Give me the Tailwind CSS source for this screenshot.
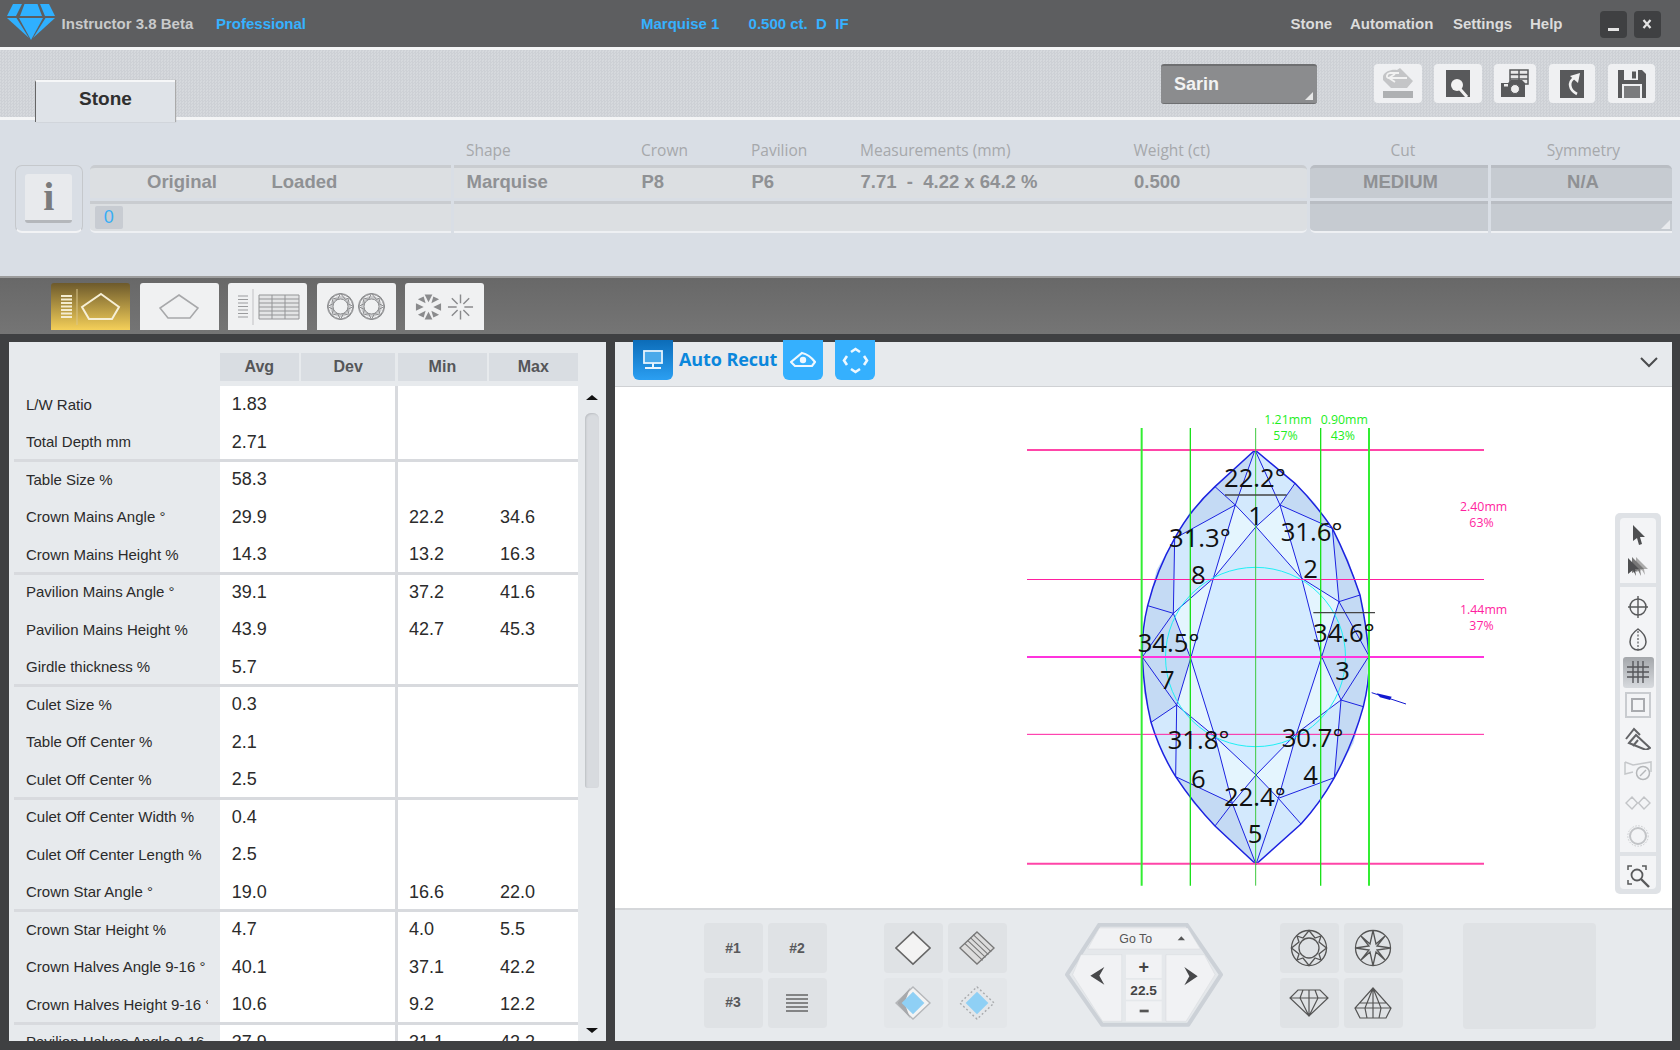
<!DOCTYPE html>
<html><head><meta charset="utf-8"><script src="https://cdn.jsdelivr.net/npm/@tailwindcss/browser@4"></script></head>
<body class="m-0">
<div class="w-[1680px] h-[1050px] overflow-hidden flex flex-col bg-[#3f4042] font-['Liberation_Sans',Arial,sans-serif]">

<!-- title bar -->
<header class="h-[47px] shrink-0 bg-[#5d5e60] flex items-center pl-[7px] pt-[1px] text-[15px] font-bold whitespace-nowrap">
  <svg class="w-[54.6px] h-[40px] shrink-0 -mt-[4px]" viewBox="0 0 54.6 40"><g fill="#2fb0ff"><polygon points="6,2 15,2 9,14 0,14"/><polygon points="17.5,2 30.5,2 35,14 13,14"/><polygon points="33,2 42,2 48,14 38,14"/><polygon points="0,16 9.5,16 22,36"/><polygon points="12,16 36,16 24,38"/><polygon points="38.5,16 48,16 26,36"/></g></svg>
  <span class="w-[154.4px] text-[#c9cacb]">Instructor 3.8 Beta</span>
  <span class="w-[425px] text-[#36b1ff]">Professional</span>
  <span class="w-[107.6px] text-[#36b1ff]">Marquise 1</span>
  <span class="w-[541.9px] text-[#36b1ff]">0.500 ct.&nbsp; D&nbsp; IF</span>
  <span class="w-[59.5px] text-[#dcdcdc]">Stone</span>
  <span class="w-[103px] text-[#dcdcdc]">Automation</span>
  <span class="w-[77px] text-[#dcdcdc]">Settings</span>
  <span class="w-[70px] text-[#dcdcdc]">Help</span>
  <span class="w-[27px] h-[27px] rounded-[4px] bg-[#3f4042] flex items-end justify-center pb-[7px]"><span class="w-[11px] h-[2.5px] bg-[#e4e4e4]"></span></span>
  <span class="w-[27px] h-[27px] ml-[7px] rounded-[4px] bg-[#3f4042] flex items-center justify-center"><svg class="w-[10px] h-[10px]" viewBox="0 0 10 10"><path d="M1.5 1 L8.5 9 M8.5 1 L1.5 9" stroke="#e4e4e4" stroke-width="2.2"/></svg></span>
</header>

<!-- textured strip -->
<div class="h-[73px] shrink-0 border-y-[3px] border-[#f4f5f6] bg-[repeating-conic-gradient(#cdd0d5_0_25%,#d6d9dd_0_50%)] bg-[length:3px_3px] flex items-start relative">
  <div class="ml-[35px] mt-[30px] w-[140px] h-[42px] -mb-[2px] pb-[6px] relative bg-[#dfe3e8] border-t-2 border-t-[#f6f7f8] border-l border-l-[#666] shadow-[1px_0_1px_#aaa] flex items-center justify-center text-[19px] font-bold text-[#2f2f2f]">Stone</div>
  <div class="ml-[986px] mt-[14px] w-[156px] h-[40px] rounded-[3px] bg-[#8b8c8e] border-t-2 border-t-[#6e6f71] border-b border-b-[#6e6f71] relative flex items-center pl-[13px] text-[18px] font-bold text-[#f2f2f2]">Sarin
    <svg class="absolute right-[4px] bottom-[3px] w-[8px] h-[8px]" viewBox="0 0 8 8"><polygon points="8,0 8,8 0,8" fill="#e6e6e6"/></svg>
  </div>
  <div class="ml-[57px] mt-[14px] w-[48px] h-[39px] rounded-[4px] bg-[#eff0f2] flex items-center justify-center">
    <svg class="w-[36px] h-[34px]" viewBox="0 0 36 34"><rect x="3" y="24" width="30" height="7" fill="#aeb0b2"/><path d="M3 9 C5 4 12 2 17 3 L20 1 L33 14 L27 21 H11 L3 13Z" fill="#c4c5c7"/><path d="M27 11 H9 C6 11 6 7 10 6 H19 M15 7 L9 11 L15 15" fill="none" stroke="#f2f2f2" stroke-width="1.8"/></svg>
  </div>
  <div class="ml-[12px] mt-[14px] w-[48px] h-[39px] rounded-[4px] bg-[#eff0f2] flex items-center justify-center">
    <svg class="w-[26px] h-[29px]" viewBox="0 0 26 29"><rect x="1" y="1" width="24" height="27" fill="#58595b"/><circle cx="12" cy="16" r="6" fill="#f2f2f2"/><path d="M15 20 L22 28" stroke="#f2f2f2" stroke-width="3"/></svg>
  </div>
  <div class="ml-[12px] mt-[14px] w-[42px] h-[39px] rounded-[4px] bg-[#eff0f2] flex items-center justify-center">
    <svg class="w-[30px] h-[30px]" viewBox="0 0 30 30"><path d="M10 1 H28 V15 H10 Z M10 5.5 H28 M10 10 H28 M19 1 V15" fill="#e8e8e8" stroke="#58595b" stroke-width="1.5"/><path d="M1 14 H8 L11 11 H22 L25 14 V28 H1 Z" fill="#58595b"/><circle cx="15" cy="20" r="4.5" fill="#eee" stroke="#58595b" stroke-width="1"/><rect x="4" y="15" width="4" height="2.5" fill="#eee"/></svg>
  </div>
  <div class="ml-[13px] mt-[14px] w-[46px] h-[39px] rounded-[4px] bg-[#eff0f2] flex items-center justify-center">
    <svg class="w-[24px] h-[28px]" viewBox="0 0 24 28"><rect x="0" y="0" width="24" height="28" fill="#58595b"/><path d="M17 24 C9 20 8 12 14 8" fill="none" stroke="#f2f2f2" stroke-width="2.6"/><polygon points="10,6 20,3 18,13" fill="#f2f2f2"/></svg>
  </div>
  <div class="ml-[13px] mt-[14px] w-[47px] h-[39px] rounded-[4px] bg-[#eff0f2] flex items-center justify-center">
    <svg class="w-[28px] h-[28px]" viewBox="0 0 28 28"><path d="M0 0 H24 L28 4 V28 H0 Z" fill="#58595b"/><rect x="6" y="0" width="14" height="10" fill="#eff0f2"/><rect x="14" y="1.5" width="4" height="7" fill="#58595b"/><rect x="4" y="14" width="20" height="14" fill="#eff0f2"/><rect x="6" y="16" width="16" height="12" fill="#7a7b7d"/></svg>
  </div>
</div>

<!-- stone info -->
<section class="h-[158px] shrink-0 bg-[#d9dee5] border-b-2 border-b-[#9c9c9c] flex items-start pl-[15px]">
  <div class="mt-[45px] w-[67.5px] h-[68px] rounded-[7px] border border-[#c5c8cc] border-b-2 border-b-[#f2f3f5] flex items-center justify-center shrink-0">
    <div class="w-[47px] h-[49px] rounded-[3px] bg-[#e8eaed] border-b-[3px] border-b-[#b4b7bb] flex items-center justify-center font-['Liberation_Serif',serif] font-bold text-[40px] text-[#7a7b7d]">i</div>
  </div>
  <div class="ml-[7px] flex flex-col">
    <div class="h-[45px] flex items-end pb-[3px] font-['Open_Sans',sans-serif] text-[15.5px] text-[#a6a8ab] whitespace-nowrap">
      <span class="w-[376.5px]"></span><span class="w-[175px]">Shape</span><span class="w-[110px]">Crown</span><span class="w-[109px]">Pavilion</span><span class="w-[273.5px]">Measurements (mm)</span><span class="w-[176.5px]">Weight (ct)</span><span class="w-[182px] text-center pl-[4px]">Cut</span><span class="w-[181px] text-center pl-[2px]">Symmetry</span>
    </div>
    <div class="flex gap-[3px] h-[33px] text-[18.5px] font-bold text-[#8f9194] whitespace-nowrap">
      <div class="w-[361px] bg-[#dcdfe2] border-t-[3px] border-[#c9ccd0] rounded-tl-[5px] flex items-center pb-[2px]"><span class="ml-[57.5px] w-[124.5px]">Original</span><span>Loaded</span></div>
      <div class="w-[853px] bg-[#dcdfe2] border-t-[3px] border-[#c9ccd0] rounded-tr-[5px] flex items-center pl-[13px] pb-[2px]"><span class="w-[175px]">Marquise</span><span class="w-[110px]">P8</span><span class="w-[109px]">P6</span><span class="w-[273.5px]">7.71&nbsp; -&nbsp; 4.22 x 64.2 %</span><span>0.500</span></div>
      <div class="w-[178px] bg-[#c6cbd1] border-t-[3px] border-[#b9bdc3] rounded-tl-[5px] flex items-center justify-center pb-[2px] pl-[4px]">MEDIUM</div>
      <div class="w-[181px] bg-[#c6cbd1] border-t-[3px] border-[#b9bdc3] rounded-tr-[5px] flex items-center justify-center pb-[2px] pl-[4px]">N/A</div>
    </div>
    <div class="flex gap-[3px] h-[32px] mt-[3px] border-b-0">
      <div class="w-[361px] bg-[#dcdfe2] border-t-[3px] border-t-[#c9ccd0] border-b-2 border-b-[#eef0f3] rounded-bl-[5px] flex items-center pl-[5.5px]"><span class="w-[27.6px] h-[23px] rounded-[2px] bg-[#c8ccd2] flex items-center justify-center text-[18px] text-[#38aef5]">0</span></div>
      <div class="w-[853px] bg-[#dcdfe2] border-t-[3px] border-t-[#c9ccd0] border-b-2 border-b-[#eef0f3] rounded-br-[5px]"></div>
      <div class="w-[178px] bg-[#c6cbd1] border-t-[3px] border-t-[#b9bdc3] border-b-2 border-b-[#eef0f3] rounded-bl-[5px]"></div>
      <div class="w-[181px] bg-[#c6cbd1] border-t-[3px] border-t-[#b9bdc3] border-b-2 border-b-[#eef0f3] relative"><svg class="absolute right-[2px] bottom-[2px] w-[9px] h-[9px]" viewBox="0 0 9 9"><polygon points="9,0 9,9 0,9" fill="#e8eaed"/></svg></div>
    </div>
  </div>
</section>

<!-- view tabs -->
<nav class="h-[56px] shrink-0 bg-[linear-gradient(#686868,#757575)] flex items-start pt-[5px] pl-[51px] gap-[9.5px]">
  <div class="w-[79px] h-[47px] rounded-t-[3px] bg-[linear-gradient(#6d5a2c,#f4cf59)] flex items-center justify-center">
    <svg class="w-[66px] h-[38px]" viewBox="0 0 66 38"><path d="M3 8H14M3 11.5H14M3 15H14M3 18.5H14M3 22H14M3 25.5H14M3 29H14" stroke="#f4ecd0" stroke-width="2"/><path d="M19 1V37" stroke="#d8c48a" stroke-width="1"/><polygon points="43,6 61,19 54,31 31,31 24,19" fill="none" stroke="#f6efd6" stroke-width="2"/></svg>
  </div>
  <div class="w-[79px] h-[47px] rounded-t-[3px] bg-[#f0f1f2] flex items-center justify-center">
    <svg class="w-[40px] h-[26px]" viewBox="0 0 40 26"><polygon points="20,1 39,14 31,24 9,24 1,14" fill="none" stroke="#a7a8aa" stroke-width="1.6"/></svg>
  </div>
  <div class="w-[79px] h-[47px] rounded-t-[3px] bg-[#f0f1f2] flex items-center justify-center">
    <svg class="w-[66px] h-[38px]" viewBox="0 0 66 38"><path d="M3 8H13M3 11.5H13M3 15H13M3 18.5H13M3 22H13M3 25.5H13M3 29H13" stroke="#9a9b9d" stroke-width="1.2"/><path d="M18 1V37" stroke="#c9cacc" stroke-width="1.2"/><path d="M24 7H64V31H24ZM24 11H64M24 15H64M24 19H64M24 23H64M24 27H64M37 7V31M50 7V31" fill="#e3e4e5" stroke="#949597" stroke-width="1"/></svg>
  </div>
  <div class="w-[79px] h-[47px] rounded-t-[3px] bg-[#f0f1f2] flex items-center justify-center gap-[4px]">
    <svg class="w-[27px] h-[27px]" viewBox="-13.5 -13.5 27 27"><circle r="10.5" fill="#c9cacc"/><circle r="7.5" fill="#f0f1f2"/><g fill="none" stroke="#8c8d8f" stroke-width="1"><circle r="13"/><circle r="7.5"/><polygon points="0,-13 5,-11 9,-9 11,-5 13,0 11,5 9,9 5,11 0,13 -5,11 -9,9 -11,5 -13,0 -11,-5 -9,-9 -5,-11"/><path d="M0 -13L5 -7L9 -9L7 -3L13 0L7 3L9 9L3 7L0 13L-3 7L-9 9L-7 3L-13 0L-7 -3L-9 -9L-3 -7Z"/></g></svg>
    <svg class="w-[27px] h-[27px]" viewBox="-13.5 -13.5 27 27"><circle r="10.5" fill="#c9cacc"/><circle r="7.5" fill="#f0f1f2"/><g fill="none" stroke="#8c8d8f" stroke-width="1"><circle r="13"/><circle r="7.5"/><polygon points="0,-13 5,-11 9,-9 11,-5 13,0 11,5 9,9 5,11 0,13 -5,11 -9,9 -11,5 -13,0 -11,-5 -9,-9 -5,-11"/><path d="M0 -13L5 -7L9 -9L7 -3L13 0L7 3L9 9L3 7L0 13L-3 7L-9 9L-7 3L-13 0L-7 -3L-9 -9L-3 -7Z"/></g></svg>
  </div>
  <div class="w-[79px] h-[47px] rounded-t-[3px] bg-[#f0f1f2] flex items-center justify-center gap-[5px]">
    <svg class="w-[27px] h-[28px]" viewBox="-14 -14 28 28"><g fill="#8a8b8d"><polygon points="-4,-13 4,-13 0,-5"/><polygon points="-4,13 4,13 0,5"/><polygon points="-13,-4 -13,4 -5,0"/><polygon points="13,-4 13,4 5,0"/><polygon points="-11,-8 -5,-11 -3,-4"/><polygon points="11,-8 5,-11 3,-4"/><polygon points="-11,8 -5,11 -3,4"/><polygon points="11,8 5,11 3,4"/></g></svg>
    <svg class="w-[27px] h-[28px]" viewBox="-14 -14 28 28"><path d="M0 -13V-4M0 13V4M-13 0H-4M13 0H4M-9 -9L-3 -3M9 -9L3 -3M-9 9L-3 3M9 9L3 3" stroke="#8a8b8d" stroke-width="1.5"/></svg>
  </div>
</nav>

<!-- main -->
<main class="flex-1 flex pl-[9px] pt-[8px] pb-[9px] gap-[9px] min-h-0">
  <!-- table panel -->
  <div class="w-[597px] bg-[#e7eaed] flex pl-[4px] overflow-hidden">
    <div class="w-[564.7px] flex flex-col">
      <div class="mt-[11px] h-[28px] shrink-0 ml-[207px] flex text-[16px] font-bold text-[#555659]">
        <div class="w-[78.5px] bg-[#d9dde2] flex items-center justify-center">Avg</div>
        <div class="w-[94.4px] ml-[2.5px] bg-[#d9dde2] flex items-center justify-center">Dev</div>
        <div class="w-[88.8px] ml-[2.6px] bg-[#d9dde2] flex items-center justify-center">Min</div>
        <div class="w-[88.7px] ml-[2.2px] bg-[#d9dde2] flex items-center justify-center">Max</div>
      </div>
      <div class="mt-[5px] flex-1 min-h-0 overflow-hidden text-[#2b2b2b] whitespace-nowrap bg-[linear-gradient(90deg,#e7eaed_207px,#fff_207px,#fff_382.4px,#d8dade_382.4px,#d8dade_385px,#fff_385px)]">
        <div class="grid grid-cols-[205.7px_177.3px_91px_1fr] grid-rows-[repeat(18,37.5px)] pl-[13px] text-[18px] items-center">
          <span class="w-[182px] overflow-hidden text-[15px]">L/W Ratio</span><span class="col-span-3">1.83</span>
          <span class="w-[182px] overflow-hidden text-[15px]">Total Depth mm</span><span class="col-span-3">2.71</span>
          <span class="w-[182px] overflow-hidden text-[15px]">Table Size %</span><span class="col-span-3">58.3</span>
          <span class="w-[182px] overflow-hidden text-[15px]">Crown Mains Angle °</span><span>29.9</span><span>22.2</span><span>34.6</span>
          <span class="w-[182px] overflow-hidden text-[15px]">Crown Mains Height %</span><span>14.3</span><span>13.2</span><span>16.3</span>
          <span class="w-[182px] overflow-hidden text-[15px]">Pavilion Mains Angle °</span><span>39.1</span><span>37.2</span><span>41.6</span>
          <span class="w-[182px] overflow-hidden text-[15px]">Pavilion Mains Height %</span><span>43.9</span><span>42.7</span><span>45.3</span>
          <span class="w-[182px] overflow-hidden text-[15px]">Girdle thickness %</span><span class="col-span-3">5.7</span>
          <span class="w-[182px] overflow-hidden text-[15px]">Culet Size %</span><span class="col-span-3">0.3</span>
          <span class="w-[182px] overflow-hidden text-[15px]">Table Off Center %</span><span class="col-span-3">2.1</span>
          <span class="w-[182px] overflow-hidden text-[15px]">Culet Off Center %</span><span class="col-span-3">2.5</span>
          <span class="w-[182px] overflow-hidden text-[15px]">Culet Off Center Width %</span><span class="col-span-3">0.4</span>
          <span class="w-[182px] overflow-hidden text-[15px]">Culet Off Center Length %</span><span class="col-span-3">2.5</span>
          <span class="w-[182px] overflow-hidden text-[15px]">Crown Star Angle °</span><span>19.0</span><span>16.6</span><span>22.0</span>
          <span class="w-[182px] overflow-hidden text-[15px]">Crown Star Height %</span><span>4.7</span><span>4.0</span><span>5.5</span>
          <span class="w-[182px] overflow-hidden text-[15px]">Crown Halves Angle 9-16 °</span><span>40.1</span><span>37.1</span><span>42.2</span>
          <span class="w-[182px] overflow-hidden text-[15px]">Crown Halves Height 9-16 °</span><span>10.6</span><span>9.2</span><span>12.2</span>
          <span class="w-[182px] overflow-hidden text-[15px]">Pavilion Halves Angle 9-16 °</span><span>37.9</span><span>31.1</span><span>42.2</span>
        </div>
        <div class="relative -mt-[675px] ml-[1px] flex flex-col">
          <div class="h-[3px] mt-[73px] bg-[#d8dade]"></div>
          <div class="h-[3px] mt-[109.5px] bg-[#d8dade]"></div>
          <div class="h-[3px] mt-[109.5px] bg-[#d8dade]"></div>
          <div class="h-[3px] mt-[109.5px] bg-[#d8dade]"></div>
          <div class="h-[3px] mt-[109.5px] bg-[#d8dade]"></div>
          <div class="h-[3px] mt-[109.5px] bg-[#d8dade]"></div>
        </div>
      </div>
    </div>
    <div class="w-[28.3px] flex flex-col items-center">
      <div class="mt-[53px] w-0 h-0 border-x-[6px] border-x-transparent border-b-[5px] border-b-[#111]"></div>
      <div class="mt-[13px] w-[14.5px] h-[375px] rounded-t-[6px] rounded-b-[3px] bg-[#d8dbdf] shadow-[inset_1px_1px_2px_#bcbfc3]"></div>
      <div class="mt-[240px] w-0 h-0 border-x-[6px] border-x-transparent border-t-[5px] border-t-[#111]"></div>
    </div>
  </div>

  <!-- diagram panel -->
  <div class="w-[1057px] flex flex-col bg-[#e7eaed]">
    <div class="h-[44px] shrink-0 flex items-start pl-[18px] pr-[14px]">
      <div class="-mt-[2px] w-[40px] h-[40px] rounded-b-[6px] bg-[linear-gradient(#0c6cb8,#2b9ff2)] flex items-center justify-center">
        <svg class="w-[22px] h-[22px]" viewBox="0 0 22 22"><rect x="2" y="2" width="18" height="12" fill="none" stroke="#e8f4fd" stroke-width="1.8"/><rect x="3" y="3" width="16" height="10" fill="#4aa9ea"/><path d="M11 14V18M3 19H19" stroke="#e8f4fd" stroke-width="2"/></svg>
      </div>
      <span class="ml-[6px] w-[104px] font-['Open_Sans',sans-serif] font-bold text-[18px] leading-[35px] text-[#0b87dc] whitespace-nowrap tracking-[-0.1px]">Auto Recut</span>
      <div class="-mt-[2px] w-[40px] h-[40px] rounded-b-[6px] bg-[#35b0fe] flex items-center justify-center">
        <svg class="w-[26px] h-[18px]" viewBox="0 0 26 18"><path d="M1 11 L12 2 C17 3 22 7 25 11 L22 15 H5 Z" fill="none" stroke="#eef8ff" stroke-width="2.2"/><circle cx="13" cy="9" r="3.2" fill="#eef8ff"/></svg>
      </div>
      <div class="-mt-[2px] ml-[12px] w-[40px] h-[40px] rounded-b-[6px] bg-[#35b0fe] flex items-center justify-center">
        <svg class="w-[27px] h-[27px]" viewBox="0 0 27 27"><path d="M9 5 L13.5 2 L18 5 M22 9 L25 13.5 L22 18 M18 22 L13.5 25 L9 22 M5 18 L2 13.5 L5 9" fill="none" stroke="#eef8ff" stroke-width="2.6"/></svg>
      </div>
      <svg class="ml-auto mt-[15px] w-[18px] h-[11px]" viewBox="0 0 18 11"><path d="M1 1 L9 9 L17 1" fill="none" stroke="#4a4b4d" stroke-width="2"/></svg>
    </div>

    <div class="h-[522px] shrink-0 bg-white relative border-t border-t-[#cfd1d4]">
      <svg class="absolute left-[385px] top-[13px] w-[520px] h-[500px]" viewBox="0 0 1560 1500" font-family="'Open Sans',sans-serif">
        <path d="M765 150 L645 260 Q570 330 524 415 Q470 510 443 617 Q425 690 427 771 Q432 880 453 967 Q480 1055 527 1130 Q580 1210 645 1278 L768 1393 L903 1272 Q960 1210 1003 1133 Q1060 1030 1090 920 Q1110 840 1107 768 Q1100 680 1080 585 Q1045 480 997 385 Q945 310 885 250 Z" fill="#d3e9fd"/>
        <g fill="#c4daf4">
          <polygon points="645,260 706,315 524,415 570,335"/><polygon points="885,250 840,315 997,385 945,310"/>
          <polygon points="524,415 520,640 443,617 470,510"/><polygon points="997,385 1017,605 1080,585 1045,480"/>
          <polygon points="443,617 520,640 427,771"/><polygon points="1080,585 1017,605 1107,768"/>
          <polygon points="427,771 530,915 453,967 432,880"/><polygon points="1107,768 1023,900 1090,920"/>
          <polygon points="1023,900 1090,920 1060,1030 1003,1133"/><polygon points="527,1130 697,1210 645,1278 580,1210"/>
          <polygon points="427,771 520,640 572,775 530,915"/><polygon points="1107,768 1017,605 965,770 1023,900"/>
          <polygon points="765,150 645,260 706,315"/><polygon points="697,1210 645,1278 768,1393"/>
        </g>
        <g fill="#e4f5fe">
          <polygon points="706,315 768,380 640,535"/><polygon points="840,315 768,380 905,535"/>
          <polygon points="645,1010 768,1125 697,1210"/><polygon points="890,1000 768,1125 835,1195"/>
          <polygon points="520,640 640,535 572,775"/><polygon points="1017,605 905,535 965,770"/>
          <polygon points="530,915 572,775 645,1010"/><polygon points="1023,900 965,770 890,1000"/>
        </g>
        <polygon points="640,535 905,535 965,770 890,1000 768,1125 645,1010 572,775" fill="#d4ebff"/>
        <g fill="none" stroke="#1c22e0" stroke-width="3">
          <path d="M765 150 L645 260 Q570 330 524 415 Q470 510 443 617 Q425 690 427 771 Q432 880 453 967 Q480 1055 527 1130 Q580 1210 645 1278 L768 1393 L903 1272 Q960 1210 1003 1133 Q1060 1030 1090 920 Q1110 840 1107 768 Q1100 680 1080 585 Q1045 480 997 385 Q945 310 885 250 Z" stroke-width="4.5"/>
          <path d="M765 150 L706 315 L640 535 L572 775 L645 1010 L697 1210 L768 1393 L835 1195 L890 1000 L965 770 L905 535 L840 315 L765 150"/>
          <path d="M645 260 L706 315 L768 380 L640 535 L520 640 L572 775 L530 915 L645 1010 L768 1125 L890 1000 L1023 900 L965 770 L1017 605 L905 535 L768 380 L840 315 L885 250"/>
          <path d="M706 315 L524 415 L520 640 L443 617 M520 640 L427 771 L530 915 L453 967 M530 915 L527 1130 L697 1210 L645 1278 M697 1210 L768 1125 L835 1195 L903 1272 M835 1195 L1003 1133 L1023 900 L1090 920 M1023 900 L1107 768 L1017 605 L1080 585 M1017 605 L997 385 L840 315"/>
        </g>
        <ellipse cx="766.5" cy="771" rx="270" ry="269" fill="none" stroke="#1ff0f5" stroke-width="3"/>
        <g fill="none">
          <path d="M81 150H1452" stroke="#ff45a8" stroke-width="6"/><path d="M81 538.5H1452" stroke="#ff1fa0" stroke-width="3"/><path d="M81 771H1452" stroke="#ff33dd" stroke-width="6"/><path d="M81 1003H1452" stroke="#ff1fa0" stroke-width="3"/><path d="M81 1391H1452" stroke="#ff45a8" stroke-width="6"/>
          <path d="M425 84V1457" stroke="#33ee33" stroke-width="6"/><path d="M571 84V1457" stroke="#1be01b" stroke-width="4"/><path d="M767 84V1457" stroke="#3ec93e" stroke-width="3"/><path d="M962 84V1457" stroke="#1be01b" stroke-width="4"/><path d="M1107 84V1457" stroke="#33ee33" stroke-width="6"/>
          <path d="M675 285H860M940 638H1125" stroke="#444" stroke-width="4"/>
        </g>
        <path d="M1115 878 L1218 912" stroke="#1218d0" stroke-width="3"/><polygon points="1130,880 1175,890 1170,900 1140,892" fill="#1218d0"/>
        <g font-size="77" fill="#111">
          <text x="672" y="260">22.2°</text><text x="745" y="375">1</text><text x="507" y="440">31.3°</text><text x="842" y="422">31.6°</text><text x="573" y="552">8</text><text x="910" y="535">2</text><text x="413" y="756">34.5°</text><text x="939" y="727">34.6°</text><text x="480" y="868">7</text><text x="1006" y="840">3</text><text x="503" y="1047">31.8°</text><text x="845" y="1040">30.7°</text><text x="573" y="1163">6</text><text x="910" y="1152">4</text><text x="672" y="1218">22.4°</text><text x="743" y="1330">5</text>
        </g>
        <g font-size="37" fill="#22ee22"><text x="793" y="72">1.21mm</text><text x="820" y="120">57%</text><text x="962" y="72">0.90mm</text><text x="992" y="120">43%</text></g>
        <g font-size="37" fill="#ff1fa0"><text x="1380" y="332">2.40mm</text><text x="1408" y="380">63%</text><text x="1380" y="642">1.44mm</text><text x="1408" y="690">37%</text></g>
      </svg>
      <!-- side tools -->
      <div class="absolute left-[1000px] top-[126px] w-[46px] h-[381px] rounded-[5px] bg-[#dfe2e6] p-[5px]">
        <div class="h-full rounded-[4px] bg-[#f3f4f6] flex flex-col items-center">
          <div class="h-[65px] w-full flex flex-col items-center gap-[10px] pt-[6px] shrink-0">
            <svg class="w-[16px] h-[22px] shrink-0" viewBox="0 0 16 22"><polygon points="3,1 15,13 10,13 12,20 9,21 7,14 3,17" fill="#4e4f51"/></svg>
            <svg class="w-[24px] h-[22px] shrink-0" viewBox="0 0 24 22"><polygon points="10,1 22,13 18,13 19,19 16,14 10,16" fill="#aaa"/><polygon points="6,1 18,13 14,13 15,20 12,14 6,17" fill="#777"/><polygon points="2,2 13,13 9,13 10,20 7,14 2,18" fill="#4e4f51"/></svg>
          </div>
          <div class="h-[4px] w-[36px] bg-[#dfe2e6] shrink-0"></div>
          <div class="w-full flex-1 flex flex-col items-center pt-[3.6px] [&>div]:h-[32.7px] [&>div]:w-full [&>div]:flex [&>div]:items-center [&>div]:justify-center [&>div]:shrink-0">
            <div><svg class="w-[20px] h-[22px]" viewBox="0 0 20 22"><circle cx="10" cy="11" r="8" fill="none" stroke="#58595b" stroke-width="1.5"/><path d="M10 0V22M0 11H20" stroke="#58595b" stroke-width="1.4"/></svg></div>
            <div><svg class="w-[18px] h-[24px]" viewBox="0 0 18 24"><path d="M9 1 C15 5 17 10 17 14 A8 8 0 0 1 1 14 C1 10 3 5 9 1Z" fill="none" stroke="#58595b" stroke-width="1.5"/><path d="M9 3V23" stroke="#58595b" stroke-width="1.2" stroke-dasharray="2 1.5"/></svg></div>
            <div><span class="w-[31px] h-[31px] rounded-[3px] bg-[linear-gradient(#a4a7ab,#d7dade)] flex items-center justify-center"><svg class="w-[24px] h-[24px]" viewBox="0 0 24 24"><path d="M7 1V23M12 1V23M17 1V23M1 7H23M1 12H23M1 17H23" stroke="#55565a" stroke-width="1.4"/></svg></span></div>
            <div><svg class="w-[26px] h-[26px]" viewBox="0 0 26 26"><rect x="1" y="1" width="24" height="24" fill="none" stroke="#c9ccd0" stroke-width="2"/><rect x="7" y="7" width="12" height="12" fill="none" stroke="#a9abaf" stroke-width="2"/></svg></div>
            <div><svg class="w-[26px] h-[24px]" viewBox="0 0 26 24"><path d="M1 13 L9 3 L15 9 M4 17 L11 9 L25 22 L21 24 Z" fill="none" stroke="#636467" stroke-width="2"/><path d="M8 20 L13 14" stroke="#636467" stroke-width="2"/></svg></div>
            <div><svg class="w-[28px] h-[22px]" viewBox="0 0 28 22"><path d="M1 3 L9 6 L27 3 V13 M1 3 V15 L9 13" fill="none" stroke="#c5c7ca" stroke-width="1.5"/><circle cx="19" cy="14" r="6.5" fill="#f3f4f6" stroke="#b5b7ba" stroke-width="1.5"/><path d="M16 17 L22 11" stroke="#b5b7ba" stroke-width="1.5"/></svg></div>
            <div><svg class="w-[26px] h-[14px]" viewBox="0 0 26 14"><path d="M7 1 L12.5 7 L7 13 L1 7Z M19 1 L25 7 L19 13 L13.5 7Z" fill="none" stroke="#c2c4c7" stroke-width="1.4"/></svg></div>
            <div><svg class="w-[22px] h-[22px]" viewBox="0 0 22 22"><circle cx="11" cy="11" r="8" fill="none" stroke="#c2c4c7" stroke-width="2"/><circle cx="11" cy="11" r="10.2" fill="none" stroke="#c8cacd" stroke-width="1" stroke-dasharray="1.5 1.5"/></svg></div>
          </div>
          <div class="h-[4px] w-[36px] bg-[#dfe2e6] shrink-0"></div>
          <div class="h-[33px] w-full flex items-start justify-center pt-[9px] shrink-0">
            <svg class="w-[23px] h-[23px]" viewBox="0 0 23 23"><path d="M1 5V1H5M15 1H19V5M1 15V19H5" fill="none" stroke="#58595b" stroke-width="1.5"/><circle cx="10" cy="10" r="5.5" fill="none" stroke="#58595b" stroke-width="1.8"/><path d="M14 14L22 22" stroke="#58595b" stroke-width="2.4"/></svg>
          </div>
        </div>
      </div>
    </div>

    <!-- bottom controls -->
    <div class="flex-1 border-t-2 border-t-[#d5d7da] pt-[13px] pl-[88.5px] flex items-start font-bold text-[14px] text-[#58595b]">
      <div class="grid grid-cols-[59px_59px] grid-rows-[50px_50px] gap-x-[5px] gap-y-[4.5px]">
        <div class="bg-[#dfe2e5] rounded-[4px] flex items-center justify-center">#1</div>
        <div class="bg-[#dfe2e5] rounded-[4px] flex items-center justify-center">#2</div>
        <div class="bg-[#dfe2e5] rounded-[4px] flex items-center justify-center">#3</div>
        <div class="bg-[#dfe2e5] rounded-[4px] flex items-center justify-center"><svg class="w-[22px] h-[18px]" viewBox="0 0 22 18"><path d="M0 1H22M0 5H22M0 9H22M0 13H22M0 17H22" stroke="#666" stroke-width="1.3"/></svg></div>
      </div>
      <div class="ml-[57px] grid grid-cols-[59px_59px] grid-rows-[50px_50px] gap-x-[5px] gap-y-[4.5px]">
        <div class="bg-[#dfe2e5] rounded-[4px] flex items-center justify-center"><svg class="w-[36px] h-[36px]" viewBox="0 0 38 36"><polygon points="19,1 37,18 19,35 1,18" fill="#f3f3f3" stroke="#666" stroke-width="1.6"/></svg></div>
        <div class="bg-[#dfe2e5] rounded-[4px] flex items-center justify-center"><svg class="w-[36px] h-[36px]" viewBox="0 0 38 36"><polygon points="19,1 37,18 19,35 1,18" fill="#dcdcdc" stroke="#777" stroke-width="1.4"/><path d="M6 13 L25 31 M9 10 L28 28 M12 7 L31 25 M15 4 L34 22" stroke="#777" stroke-width="1.1"/></svg></div>
        <div class="bg-[#e3e6e9] rounded-[4px] flex items-center justify-center"><svg class="w-[36px] h-[36px]" viewBox="0 0 38 36"><polygon points="19,1 37,18 19,35 1,18" fill="#f3f3f3" stroke="#b5b7ba" stroke-width="1.5"/><polygon points="16,2 2,18 16,34 10,18" fill="#a7a9ac"/><polygon points="19,6 31,18 19,30 7,18" fill="#8fd0f5"/></svg></div>
        <div class="bg-[#e3e6e9] rounded-[4px] flex items-center justify-center"><svg class="w-[36px] h-[36px]" viewBox="0 0 38 36"><polygon points="19,1 37,18 19,35 1,18" fill="none" stroke="#a8aaad" stroke-width="1.5" stroke-dasharray="2 2.5"/><polygon points="19,6 31,18 19,30 7,18" fill="#8fd0f5"/></svg></div>
      </div>
      <svg class="ml-[58px] w-[158px] h-[104px] shrink-0" viewBox="72 10 474 312" font-family="'Liberation Sans',Arial,sans-serif">
        <polygon points="175,15 437,15 540,165 442,315 183,315 78,165" fill="#e5e8eb" stroke="#ccd1d7" stroke-width="12" stroke-linejoin="round"/>
        <polygon points="175,25 440,25 478,88 140,88" fill="#f1f2f4" stroke="#cdd0d4" stroke-width="1"/>
        <polygon points="120,105 242,105 242,305 185,305 95,165" fill="#f1f2f4" stroke="#cfd2d6"/>
        <rect x="255" y="105" width="107" height="70" fill="#f1f2f4"/><rect x="255" y="180" width="107" height="60" fill="#f1f2f4"/><rect x="255" y="245" width="107" height="60" fill="#f1f2f4"/>
        <polygon points="375,105 490,105 522,165 435,305 375,305" fill="#f1f2f4" stroke="#cfd2d6"/>
        <polygon points="190,142 148,168 190,195 175,168" fill="#47484a"/><polygon points="430,142 470,170 430,197 445,170" fill="#47484a"/>
        <text x="235" y="70" font-size="37" fill="#555" font-weight="400">Go To</text><polygon points="410,62 432,62 421,50" fill="#555"/>
        <text x="308" y="160" font-size="54" fill="#444" font-weight="700" text-anchor="middle">+</text>
        <text x="308" y="225" font-size="41" fill="#444" font-weight="700" text-anchor="middle">22.5</text>
        <rect x="296" y="270" width="27" height="8" fill="#555"/>
      </svg>
      <div class="ml-[57px] grid grid-cols-[59px_59px] grid-rows-[50px_50px] gap-x-[5px] gap-y-[4.5px]">
        <div class="bg-[#dfe2e5] rounded-[4px] flex items-center justify-center"><svg class="w-[38px] h-[38px]" viewBox="-19 -19 38 38"><g fill="none" stroke="#555" stroke-width="1.3"><circle r="17.5"/><circle r="10"/><polygon points="0,-17.5 6,-10 12,-12 10,-6 17.5,0 10,6 12,12 6,10 0,17.5 -6,10 -12,12 -10,6 -17.5,0 -10,-6 -12,-12 -6,-10"/></g></svg></div>
        <div class="bg-[#dfe2e5] rounded-[4px] flex items-center justify-center"><svg class="w-[38px] h-[38px]" viewBox="-19 -19 38 38"><g fill="none" stroke="#555" stroke-width="1.3"><circle r="17.5"/><polygon points="0,-17.5 3,-4 12,-12 4,-2 17.5,0 4,2 12,12 3,4 0,17.5 -3,4 -12,12 -4,2 -17.5,0 -4,-2 -12,-12 -3,-4"/></g></svg></div>
        <div class="bg-[#dfe2e5] rounded-[4px] flex items-center justify-center"><svg class="w-[40px] h-[28px]" viewBox="0 0 40 28"><path d="M9 1H31L39 9L20 27L1 9ZM1 9H39M14 1L11 9L20 27L29 9L26 1M20 1V27" fill="none" stroke="#555" stroke-width="1.2"/></svg></div>
        <div class="bg-[#dfe2e5] rounded-[4px] flex items-center justify-center"><svg class="w-[38px] h-[32px]" viewBox="0 0 38 32"><path d="M19 1L37 21L32 31H6L1 21ZM1 21H37M19 1V31M19 1L11 21L13 31M19 1L27 21L25 31M5 16H33" fill="none" stroke="#555" stroke-width="1.2"/></svg></div>
      </div>
      <div class="ml-[60px] w-[133px] h-[106px] rounded-[4px] bg-[#dfe2e5]"></div>
    </div>
  </div>
</main>
</div>
</body></html>
